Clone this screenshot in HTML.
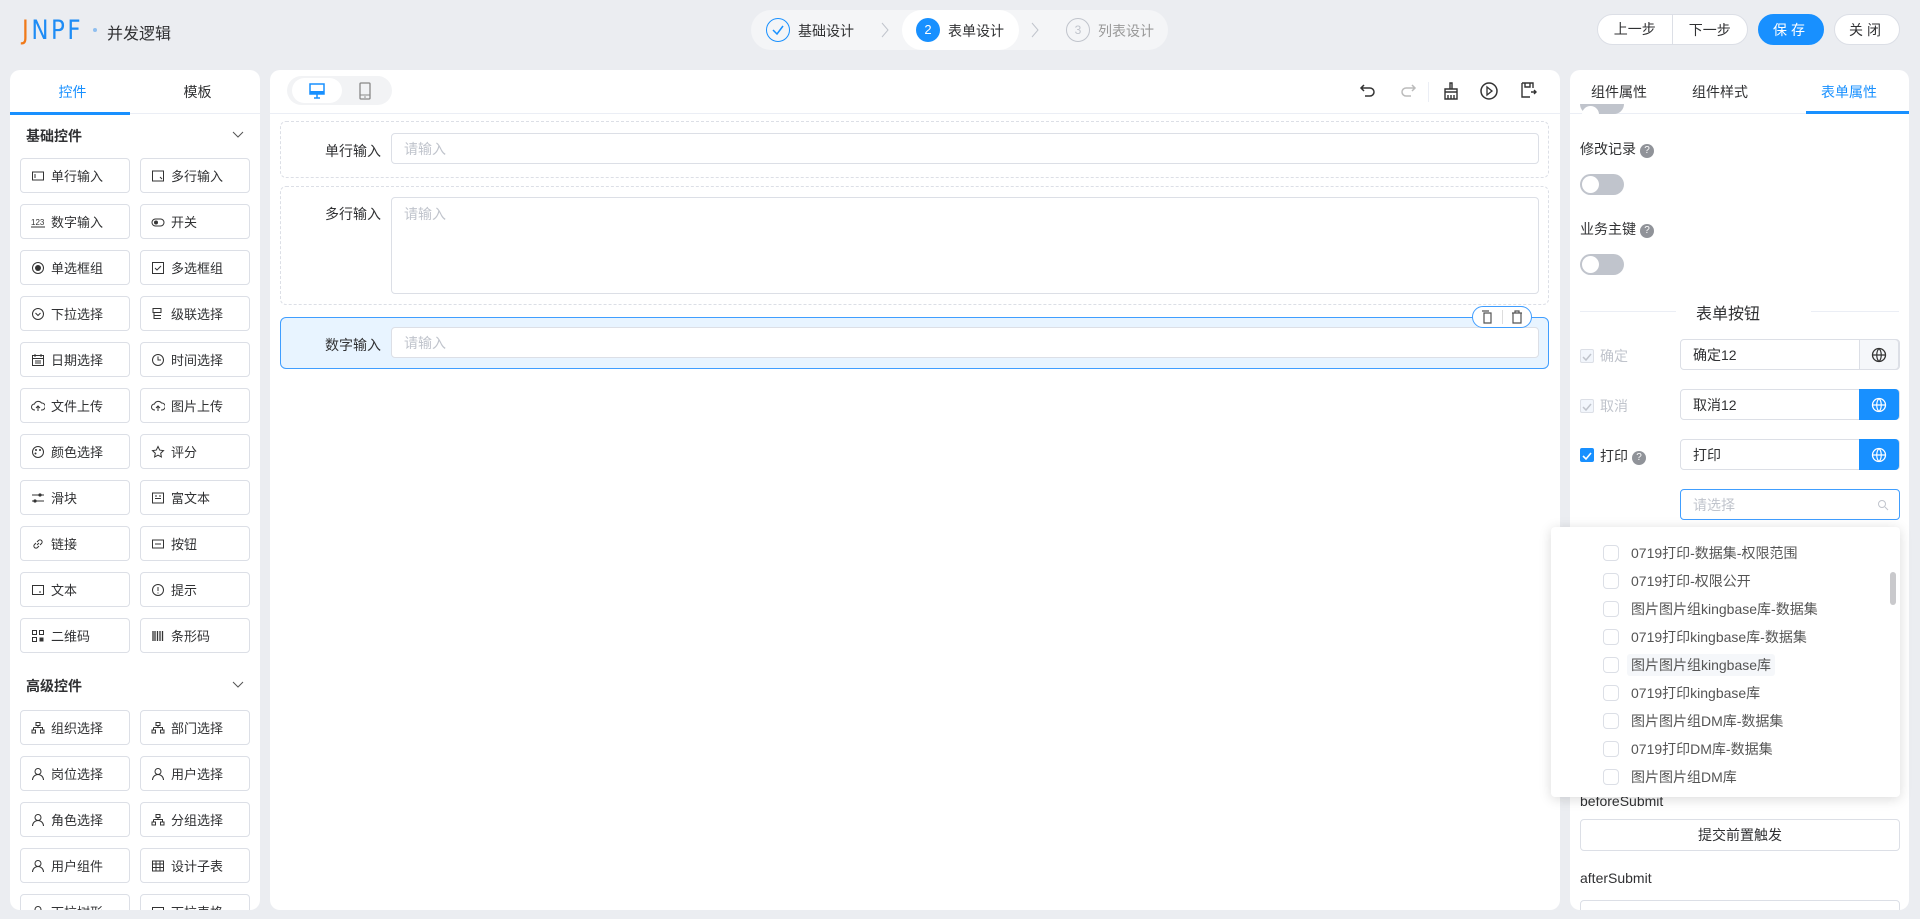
<!DOCTYPE html>
<html><head><meta charset="utf-8">
<style>
*{box-sizing:border-box;margin:0;padding:0}
body{width:1920px;height:919px;overflow:hidden;background:#ebedf1;font-family:"Liberation Sans","Noto Sans CJK SC",sans-serif;font-size:14px;color:#303133;position:relative}
.abs{position:absolute}
.panel{position:absolute;background:#fff;border-radius:10px;overflow:hidden}
.btn{position:absolute;height:31px;border-radius:16px;background:#fff;border:1px solid #dcdfe6;display:flex;align-items:center;justify-content:center;font-size:14px}
.item{position:absolute;width:110px;height:35px;border:1px solid #dcdfe6;border-radius:4px;display:flex;align-items:center;padding-left:10px;font-size:13px;color:#303133}
.item svg{width:14px;height:14px;margin-right:6px;flex:none}
.inp{position:absolute;border:1px solid #dcdfe6;border-radius:4px;background:#fff;color:#c0c4cc;padding-left:12px;font-size:14px;display:flex;align-items:center}
.lbl{position:absolute;font-size:14px;color:#303133;text-align:right;width:90px}
.sw{position:absolute;width:44px;height:21px;border-radius:11px;background:#c0c4cc}
.sw:after{content:"";position:absolute;left:2px;top:2px;width:17px;height:17px;border-radius:50%;background:#fff}
.q{display:inline-block;width:14px;height:14px;border-radius:50%;background:#909399;color:#fff;font-size:10px;text-align:center;line-height:14px;margin-left:4px;vertical-align:1px}
.cb{position:absolute;width:14px;height:14px;border:1px solid #dcdfe6;border-radius:2px;background:#fff}
.dd{position:absolute;left:0;font-size:14px;color:#555}
.dd .cb{left:52px;top:3px;width:16px;height:16px;border-radius:4px}
.dd span{position:absolute;left:76px;top:0;white-space:nowrap;line-height:22px;padding:0 4px}
.glb{position:absolute;width:40px;display:flex;align-items:center;justify-content:center;border-radius:0 4px 4px 0}
</style></head><body>

<!-- header -->
<div class="abs" style="left:22px;top:15px;font-size:27px;font-weight:normal;letter-spacing:3px;font-family:'DejaVu Sans',sans-serif;transform:scaleX(0.85);transform-origin:left"><span style="color:#f07a1a">J</span><span style="color:#1e8cf5">NPF</span></div>
<div class="abs" style="left:93px;top:28px;width:4px;height:4px;border-radius:50%;background:#8fbff0"></div>
<div class="abs" style="left:107px;top:20px;font-size:16px;color:#303133">并发逻辑</div>

<div class="abs" style="left:751px;top:10px;width:417px;height:40px;border-radius:20px;background:#f4f5f7"></div>
<div class="abs" style="left:902px;top:10px;width:117px;height:40px;border-radius:20px;background:#fff"></div>
<div class="abs" style="left:766px;top:18px;width:24px;height:24px;border-radius:50%;border:1px solid #1890ff"><svg width="22" height="22" viewBox="0 0 22 22"><path d="M6 11l4 4 6-8" stroke="#1890ff" stroke-width="1.5" fill="none"/></svg></div>
<div class="abs" style="left:798px;top:21px;font-size:14px">基础设计</div>
<svg class="abs" style="left:880px;top:22px" width="10" height="16"><path d="M2 1l6 7-6 7" stroke="#c0c4cc" fill="none"/></svg>
<div class="abs" style="left:916px;top:18px;width:24px;height:24px;border-radius:50%;background:#1890ff;color:#fff;font-size:13px;text-align:center;line-height:24px">2</div>
<div class="abs" style="left:948px;top:21px;font-size:14px">表单设计</div>
<svg class="abs" style="left:1030px;top:22px" width="10" height="16"><path d="M2 1l6 7-6 7" stroke="#c0c4cc" fill="none"/></svg>
<div class="abs" style="left:1066px;top:18px;width:24px;height:24px;border-radius:50%;border:1px solid #c0c4cc;color:#c0c4cc;font-size:12px;text-align:center;line-height:22px">3</div>
<div class="abs" style="left:1098px;top:21px;font-size:14px;color:#999">列表设计</div>

<div class="btn" style="left:1597px;top:14px;width:151px;border-radius:16px"><span style="width:75px;text-align:center;border-right:1px solid #dcdfe6;line-height:29px">上一步</span><span style="width:75px;text-align:center">下一步</span></div>
<div class="btn" style="left:1758px;top:14px;width:66px;background:#1890ff;border-color:#1890ff;color:#fff;letter-spacing:4px">保存</div>
<div class="btn" style="left:1834px;top:14px;width:66px;letter-spacing:4px">关闭</div>

<!-- left panel -->
<div class="panel" style="left:10px;top:70px;width:250px;height:840px">
 <div class="abs" style="left:0;top:0;width:250px;height:44px;border-bottom:1px solid #ebeef5"></div>
 <div class="abs" style="left:0;top:12px;width:125px;text-align:center;color:#1890ff">控件</div>
 <div class="abs" style="left:125px;top:12px;width:125px;text-align:center">模板</div>
 <div class="abs" style="left:0;top:42px;width:120px;height:3px;background:#1890ff"></div>
 <div class="abs" style="left:16px;top:56px;font-weight:bold;font-size:14px">基础控件</div>
 <svg class="abs" style="left:222px;top:61px" width="12" height="8"><path d="M1 1l5 5 5-5" stroke="#555" fill="none"/></svg>
 <div class="abs" style="left:16px;top:606px;font-weight:bold;font-size:14px">高级控件</div>
 <svg class="abs" style="left:222px;top:611px" width="12" height="8"><path d="M1 1l5 5 5-5" stroke="#555" fill="none"/></svg>
</div>
<div id="items"></div>

<!-- center -->
<div class="panel" style="left:270px;top:70px;width:1290px;height:840px">
 <div class="abs" style="left:0;top:0;width:1290px;height:44px;border-bottom:1px solid #ebeef5"></div>
 <div class="abs" style="left:17px;top:6px;width:105px;height:29px;border-radius:15px;background:#f2f3f5"></div>
 <div class="abs" style="left:22px;top:8px;width:50px;height:25px;border-radius:13px;background:#fff"></div>
 <svg class="abs" style="left:38px;top:12px" width="18" height="18" viewBox="0 0 18 18"><rect x="2" y="2" width="14" height="10" fill="none" stroke="#1890ff" stroke-width="1.5"/><rect x="2" y="9" width="14" height="3" fill="#1890ff"/><path d="M9 12v4M6 16h6" stroke="#1890ff" stroke-width="1.5"/></svg>
 <svg class="abs" style="left:88px;top:12px" width="14" height="18" viewBox="0 0 14 18"><rect x="2" y="1" width="10" height="16" rx="1" fill="none" stroke="#888" stroke-width="1.3"/><path d="M2 13h10" stroke="#888"/><circle cx="7" cy="15" r=".8" fill="#888"/></svg>
 <svg class="abs" style="left:1089px;top:12px" width="18" height="18" viewBox="0 0 18 18"><path d="M5 3L2 6l3 3M2 6h9a4 4 0 010 8H6" stroke="#333" stroke-width="1.5" fill="none"/></svg>
 <svg class="abs" style="left:1129px;top:12px" width="18" height="18" viewBox="0 0 18 18"><path d="M13 3l3 3-3 3M16 6H7a4 4 0 000 8h5" stroke="#bbb" stroke-width="1.5" fill="none"/></svg>
 <div class="abs" style="left:1158px;top:12px;width:1px;height:20px;background:#ebeef5"></div>
 <svg class="abs" style="left:1171px;top:11px" width="20" height="20" viewBox="0 0 20 20"><path d="M9 2h2v6H9z M4 8h12v3H4z M4 11h12v7H4z M7 14v4M10 14v4M13 14v4" stroke="#333" stroke-width="1.4" fill="none"/></svg>
 <svg class="abs" style="left:1209px;top:11px" width="20" height="20" viewBox="0 0 20 20"><circle cx="10" cy="10" r="8" stroke="#333" stroke-width="1.5" fill="none"/><path d="M8 6v8l5-4z" stroke="#333" stroke-width="1.3" fill="none"/></svg>
 <svg class="abs" style="left:1249px;top:11px" width="18" height="18" viewBox="0 0 18 18"><path d="M3 2h11v5M3 2v14h8M6 2v4h5V2M12 11h5M15 9l2 2-2 2" stroke="#333" stroke-width="1.4" fill="none"/></svg>

 <div class="abs" style="left:10px;top:51px;width:1269px;height:57px;border:1px dashed #dcdfe6;border-radius:6px"></div>
 <div class="lbl" style="left:21px;top:71px">单行输入</div>
 <div class="inp" style="left:121px;top:63px;width:1148px;height:31px">请输入</div>
 <div class="abs" style="left:10px;top:116px;width:1269px;height:119px;border:1px dashed #dcdfe6;border-radius:6px"></div>
 <div class="lbl" style="left:21px;top:134px">多行输入</div>
 <div class="inp" style="left:121px;top:127px;width:1148px;height:97px;align-items:flex-start;padding-top:6px">请输入</div>
 <div class="abs" style="left:10px;top:247px;width:1269px;height:52px;border:1px solid #409eff;border-radius:6px;background:#e8f4ff"></div>
 <div class="lbl" style="left:21px;top:265px">数字输入</div>
 <div class="inp" style="left:121px;top:257px;width:1148px;height:31px">请输入</div>
 <div class="abs" style="left:1202px;top:236px;width:60px;height:22px;border:1px solid #409eff;border-radius:11px;background:#fff"></div>
 <div class="abs" style="left:1232px;top:240px;width:1px;height:14px;background:#ddd"></div>
 <svg class="abs" style="left:1210px;top:240px" width="14" height="14" viewBox="0 0 14 14"><path d="M4 3h7v10H4zM2 1h7" stroke="#555" stroke-width="1.2" fill="none"/></svg>
 <svg class="abs" style="left:1240px;top:240px" width="14" height="14" viewBox="0 0 14 14"><path d="M2 3h10M5 3V1h4v2M3 3v10h8V3" stroke="#555" stroke-width="1.2" fill="none"/></svg>
</div>

<!-- right -->
<div class="panel" style="left:1570px;top:70px;width:339px;height:840px">
 <div class="abs" style="left:0;top:0;width:339px;height:44px;border-bottom:1px solid #ebeef5"></div>
 <div class="abs" style="left:21px;top:12px">组件属性</div>
 <div class="abs" style="left:122px;top:12px">组件样式</div>
 <div class="abs" style="left:251px;top:12px;color:#1890ff">表单属性</div>
 <div class="abs" style="left:236px;top:41px;width:103px;height:3px;background:#1890ff"></div>
 <div class="sw" style="left:10px;top:34px;height:10px;border-radius:0 0 11px 11px"></div>
 <div class="abs" style="left:10px;top:69px">修改记录<span class="q">?</span></div>
 <div class="sw" style="left:10px;top:104px"></div>
 <div class="abs" style="left:10px;top:149px">业务主键<span class="q">?</span></div>
 <div class="sw" style="left:10px;top:184px"></div>
 <div class="abs" style="left:10px;top:241px;width:96px;height:1px;background:#ebeef5"></div>
 <div class="abs" style="left:241px;top:241px;width:88px;height:1px;background:#ebeef5"></div>
 <div class="abs" style="left:126px;top:230px;font-size:16px">表单按钮</div>

 <div class="cb" style="left:10px;top:279px;background:#f2f6fc"><svg width="12" height="12"><path d="M2 6l3 3 5-6" stroke="#c0c4cc" stroke-width="1.5" fill="none"/></svg></div>
 <div class="abs" style="left:30px;top:276px;color:#c0c4cc">确定</div>
 <div class="inp" style="left:110px;top:269px;width:220px;height:31px;color:#303133">确定12</div>
 <div class="glb" style="left:289px;top:269px;height:31px;border:1px solid #dcdfe6;background:#f5f7fa"><svg width="16" height="16" viewBox="0 0 16 16"><circle cx="8" cy="8" r="6.5" stroke="#333" stroke-width="1.3" fill="none"/><path d="M1.5 8h13M8 1.5c-3 3-3 10 0 13M8 1.5c3 3 3 10 0 13" stroke="#333" stroke-width="1.2" fill="none"/></svg></div>

 <div class="cb" style="left:10px;top:329px;background:#f2f6fc"><svg width="12" height="12"><path d="M2 6l3 3 5-6" stroke="#c0c4cc" stroke-width="1.5" fill="none"/></svg></div>
 <div class="abs" style="left:30px;top:326px;color:#c0c4cc">取消</div>
 <div class="inp" style="left:110px;top:319px;width:220px;height:31px;color:#303133">取消12</div>
 <div class="glb" style="left:289px;top:319px;height:31px;background:#1890ff"><svg width="16" height="16" viewBox="0 0 16 16"><circle cx="8" cy="8" r="6.5" stroke="#fff" stroke-width="1.3" fill="none"/><path d="M1.5 8h13M8 1.5c-3 3-3 10 0 13M8 1.5c3 3 3 10 0 13" stroke="#fff" stroke-width="1.2" fill="none"/></svg></div>

 <div class="cb" style="left:10px;top:378px;background:#1890ff;border-color:#1890ff"><svg width="12" height="12"><path d="M2 6l3 3 5-6" stroke="#fff" stroke-width="1.6" fill="none"/></svg></div>
 <div class="abs" style="left:30px;top:376px">打印<span class="q">?</span></div>
 <div class="inp" style="left:110px;top:369px;width:220px;height:31px;color:#303133">打印</div>
 <div class="glb" style="left:289px;top:369px;height:31px;background:#1890ff"><svg width="16" height="16" viewBox="0 0 16 16"><circle cx="8" cy="8" r="6.5" stroke="#fff" stroke-width="1.3" fill="none"/><path d="M1.5 8h13M8 1.5c-3 3-3 10 0 13M8 1.5c3 3 3 10 0 13" stroke="#fff" stroke-width="1.2" fill="none"/></svg></div>

 <div class="inp" style="left:110px;top:419px;width:220px;height:31px;border-color:#409eff">请选择<svg style="position:absolute;right:10px;top:9px" width="12" height="12"><circle cx="5" cy="5" r="3.5" stroke="#c0c4cc" fill="none"/><path d="M8 8l3 3" stroke="#c0c4cc"/></svg></div>

 <div class="abs" style="left:10px;top:723px;font-size:14px">beforeSubmit</div>
 <div class="inp" style="left:10px;top:749px;width:320px;height:32px;color:#303133;justify-content:center;padding:0">提交前置触发</div>
 <div class="abs" style="left:10px;top:800px;font-size:14px">afterSubmit</div>
 <div class="inp" style="left:10px;top:830px;width:320px;height:32px"></div>
</div>

<!-- dropdown -->
<div class="abs" style="left:1551px;top:527px;width:349px;height:270px;background:#fff;border-radius:4px;box-shadow:0 2px 12px rgba(0,0,0,.15)">
 <div class="dd" style="top:15px"><div class="cb"></div><span>0719打印-数据集-权限范围</span></div>
 <div class="dd" style="top:43px"><div class="cb"></div><span>0719打印-权限公开</span></div>
 <div class="dd" style="top:71px"><div class="cb"></div><span>图片图片组kingbase库-数据集</span></div>
 <div class="dd" style="top:99px"><div class="cb"></div><span>0719打印kingbase库-数据集</span></div>
 <div class="dd" style="top:127px"><div class="cb"></div><span style="background:#f5f7fa;border-radius:3px">图片图片组kingbase库</span></div>
 <div class="dd" style="top:155px"><div class="cb"></div><span>0719打印kingbase库</span></div>
 <div class="dd" style="top:183px"><div class="cb"></div><span>图片图片组DM库-数据集</span></div>
 <div class="dd" style="top:211px"><div class="cb"></div><span>0719打印DM库-数据集</span></div>
 <div class="dd" style="top:239px"><div class="cb"></div><span>图片图片组DM库</span></div>
 <div class="abs" style="left:339px;top:45px;width:6px;height:33px;border-radius:3px;background:#c9c9cc"></div>
</div>

<script>
var I={
inp:'<rect x="1.5" y="3" width="11" height="8" fill="none" stroke="#333"/><path d="M4 5v4" stroke="#333"/>',
area:'<rect x="1.5" y="2" width="11" height="10" fill="none" stroke="#333"/><path d="M9 8l2 2" stroke="#333"/>',
num:'<text x="0" y="10" font-size="8" fill="#333" font-family="Liberation Sans">123</text><path d="M0 12h14" stroke="#333"/>',
sw:'<rect x="1" y="4" width="12" height="7" rx="3.5" fill="none" stroke="#333"/><circle cx="5" cy="7.5" r="2" fill="#333"/>',
radio:'<circle cx="7" cy="7" r="5.5" fill="none" stroke="#333"/><circle cx="7" cy="7" r="3" fill="#333"/>',
chk:'<rect x="1.5" y="1.5" width="11" height="11" fill="none" stroke="#333"/><path d="M4 7l2 2 4-4" stroke="#333" fill="none"/>',
sel:'<circle cx="7" cy="7" r="5.5" fill="none" stroke="#333"/><path d="M4.5 6l2.5 2.5L9.5 6" stroke="#333" fill="none"/>',
cas:'<rect x="2" y="1.5" width="8" height="4" fill="none" stroke="#333"/><path d="M3 5.5v6h7M3 8.5h7" stroke="#333" fill="none"/>',
date:'<rect x="1.5" y="2.5" width="11" height="10" fill="none" stroke="#333"/><path d="M1.5 5.5h11M4 1v3M10 1v3M4 8h6M4 10h6" stroke="#333"/>',
time:'<circle cx="7" cy="7" r="5.5" fill="none" stroke="#333"/><path d="M7 3.5V7h3" stroke="#333" fill="none"/>',
up:'<path d="M4 11H3.5a3 3 0 010-6 4 4 0 017-1 3 3 0 01.5 7H10M7 12V7M5 9l2-2 2 2" stroke="#333" fill="none"/>',
color:'<circle cx="7" cy="7" r="5.5" fill="none" stroke="#333"/><circle cx="5" cy="5" r="1" fill="#333"/><circle cx="9" cy="5" r="1" fill="#333"/><circle cx="4.5" cy="8.5" r="1" fill="#333"/>',
star:'<path d="M7 1.5l1.7 3.6 3.8.5-2.8 2.6.7 3.8L7 10.2 3.6 12l.7-3.8L1.5 5.6l3.8-.5z" fill="none" stroke="#333"/>',
slide:'<path d="M1 4h12M1 10h12" stroke="#333"/><circle cx="9" cy="4" r="1.6" fill="#333"/><circle cx="4" cy="10" r="1.6" fill="#333"/>',
rich:'<rect x="1.5" y="2" width="11" height="10" fill="none" stroke="#333"/><path d="M4 5h2M8 5h2M4 7.5h6" stroke="#333"/>',
link:'<path d="M6 8l2-2M5 6L3.5 7.5a2 2 0 003 3L8 9M9 8l1.5-1.5a2 2 0 00-3-3L6 5" stroke="#333" fill="none"/>',
btn:'<rect x="1.5" y="3" width="11" height="8" fill="none" stroke="#333"/><path d="M4 7h6" stroke="#333"/>',
txt:'<rect x="1.5" y="2.5" width="11" height="9" fill="none" stroke="#333"/><path d="M9 8v2" stroke="#333"/>',
tip:'<circle cx="7" cy="7" r="5.5" fill="none" stroke="#333"/><path d="M7 4v4M7 9.5v1" stroke="#333"/>',
qr:'<path d="M1.5 1.5h4v4h-4zM8.5 1.5h4v4h-4zM1.5 8.5h4v4h-4z" fill="none" stroke="#333"/><path d="M8.5 8.5h4v4h-4z" fill="#333"/>',
bar:'<path d="M2 2v10M4 2v10M6.5 2v10M9 2v10M11.5 2v10" stroke="#333" stroke-width="1.3"/>',
org:'<rect x="5" y="1.5" width="4" height="3" fill="none" stroke="#333"/><path d="M7 4.5v2M2.5 6.5h9v2M2.5 6.5v2" stroke="#333" fill="none"/><rect x="1" y="9" width="3.5" height="3" fill="none" stroke="#333"/><rect x="9.5" y="9" width="3.5" height="3" fill="none" stroke="#333"/>',
user:'<circle cx="7" cy="4.5" r="3" fill="none" stroke="#333"/><path d="M1.5 13a5.5 5.5 0 0111 0" stroke="#333" fill="none"/>',
tbl:'<rect x="1.5" y="2" width="11" height="10" fill="none" stroke="#333"/><path d="M1.5 5h11M1.5 8.5h11M5 2v10M9 2v10" stroke="#333"/>'
};
var L=[['inp','单行输入'],['area','多行输入'],['num','数字输入'],['sw','开关'],['radio','单选框组'],['chk','多选框组'],['sel','下拉选择'],['cas','级联选择'],['date','日期选择'],['time','时间选择'],['up','文件上传'],['up','图片上传'],['color','颜色选择'],['star','评分'],['slide','滑块'],['rich','富文本'],['link','链接'],['btn','按钮'],['txt','文本'],['tip','提示'],['qr','二维码'],['bar','条形码']];
var A=[['org','组织选择'],['org','部门选择'],['user','岗位选择'],['user','用户选择'],['user','角色选择'],['org','分组选择'],['user','用户组件'],['tbl','设计子表'],['user','下拉树形'],['txt','下拉表格']];
var h='';
function add(arr,top){arr.forEach(function(e,i){var x=i%2?140:20,y=top+Math.floor(i/2)*46;
h+='<div class="item" style="left:'+x+'px;top:'+y+'px"><svg viewBox="0 0 14 14">'+I[e[0]]+'</svg>'+e[1]+'</div>';});}
add(L,158);add(A,710);
var d=document.getElementById('items');d.innerHTML=h;
d.style.cssText='position:absolute;left:0;top:0;width:260px;height:910px;overflow:hidden';
</script>
</body></html>
